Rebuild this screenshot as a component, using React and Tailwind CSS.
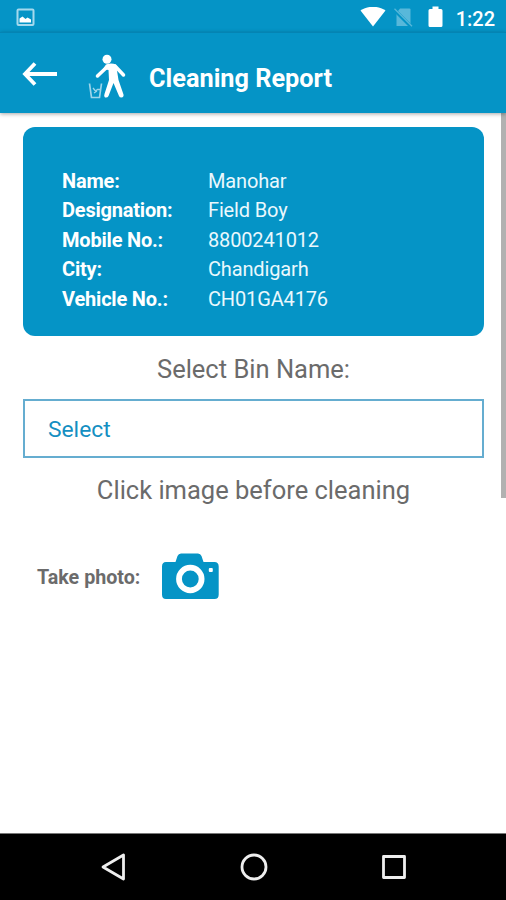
const DETAILS = [
    { label: 'Name:', value: 'Manohar' },
    { label: 'Designation:', value: 'Field Boy' },
    { label: 'Mobile No.:', value: '8800241012' },
    { label: 'City:', value: 'Chandigarh' },
    { label: 'Vehicle No.:', value: 'CH01GA4176' }
]

function StatusBar() {
    return (
        <div className="h-8 shrink-0 bg-[#0594c6] flex items-center pl-4 pr-[11px]">
            <svg className="w-[19px] h-[19px] mt-0.5" viewBox="0 0 19 19" fill="none">
                <rect x="1.5" y="1.5" width="16" height="15.5" rx="1" stroke="#a5d9ed" strokeWidth="2" />
                <path d="M3.500 14.500v-4l3-2 3 2.500 2-1.500 3.500 2v3z" fill="white" />
            </svg>
            <div className="ml-auto flex items-center">
                <svg className="w-[26px] h-5 mt-0.5" viewBox="0 0 26 20">
                    <path d="M0.5 3.5C8 -1.5 18 -1.5 25.5 3.5L13 19.5z" fill="white" />
                </svg>
                <svg className="w-[19px] h-5 ml-2 mt-1" viewBox="0 0 19 20">
                    <path d="M6 0.500h9.500q1 0 1 1v16.500h-14V5z" fill="#58b8da" />
                    <path d="M0 1.500L18 19.500" stroke="#0594c6" strokeWidth="3.500" />
                    <path d="M0.500 0.800L18 18.300" stroke="#58b8da" strokeWidth="1.300" />
                </svg>
                <svg className="w-[15px] h-[22px] ml-[15px] mt-0.5" viewBox="0 0 15 22">
                    <path d="M4.500 0.500h6v2.500H13q1.500 0 1.500 1.500v15q0 1.500-1.500 1.500H2q-1.500 0-1.500-1.500v-15Q0.500 3 2 3h2.500z" fill="white" />
                </svg>
                <span className="ml-[13px] mt-[5px] text-[20px] leading-6 font-medium text-white whitespace-nowrap">1:22</span>
            </div>
        </div>
    )
}

function AppBar() {
    return (
        <header className="relative z-10 h-[81px] shrink-0 bg-[#0594c6] border-t border-[#0484b3] flex items-center pl-[22px] shadow-[0_1px_4px_rgba(0,0,0,0.35)]">
            <svg className="w-9 h-6 mt-0.5" viewBox="0 0 36 24" fill="none" stroke="white" strokeWidth="3.8">
                <path d="M35 12H3M13 1.500L3 12L13 22.500" />
            </svg>
            <svg className="w-10 h-[46px] ml-[30px] mt-2" viewBox="88 54 40 46">
                <circle cx="107" cy="59.300" r="4.500" fill="white" />
                <path d="M107 67L97.500 76" stroke="white" strokeWidth="3.500" strokeLinecap="round" />
                <path d="M115 66L123.500 75" stroke="white" strokeWidth="3.500" strokeLinecap="round" />
                <path d="M106 64.500Q111 62.500 116 64.500L118.500 80L123.500 94.500Q124 97 121.500 97.500Q119.500 97.500 119 96L113.500 83L108.500 96Q107.500 98 105 97.500Q103.500 96.500 104.500 94L109 80L108.500 70L103 69z" fill="white" />
                <path d="M89.500 83.500L91.500 97.500H99.500L101.500 83.500" fill="none" stroke="#9ed5ea" strokeWidth="1.700" />
                <path d="M93 88L95.500 91L97.500 89.500H100M94 93L97 91" fill="none" stroke="#9ed5ea" strokeWidth="1.300" />
            </svg>
            <h1 className="ml-[21px] mt-[11px] text-[25.3px] leading-8 font-bold text-white whitespace-nowrap">Cleaning Report</h1>
        </header>
    )
}

function ProfileCard() {
    return (
        <div className="h-[209px] bg-[#0594c6] rounded-xl pt-[39px] pl-[39px]">
            {DETAILS.map((item) => (
                <div key={item.label} className="flex h-[29.5px] items-center text-[20px] text-white whitespace-nowrap">
                    <span className="w-[146px] font-bold tracking-[-0.2px]">{item.label}</span>
                    <span className="text-[#eaf8fd] tracking-[-0.15px]">{item.value}</span>
                </div>
            ))}
        </div>
    )
}

function NavBar() {
    return (
        <nav className="h-[67px] shrink-0 bg-black border-t border-[#777] flex items-center justify-between pl-[101px] pr-[99px]">
            <svg className="w-[25px] h-7" viewBox="0 0 25 28" fill="none" stroke="#eeeeee" strokeWidth="2.800" strokeLinejoin="round">
                <path d="M22.500 2V26L2 14z" />
            </svg>
            <svg className="w-7 h-7" viewBox="0 0 28 28" fill="none" stroke="#eeeeee" strokeWidth="2.800">
                <circle cx="14" cy="14" r="12" />
            </svg>
            <svg className="w-[26px] h-[26px]" viewBox="0 0 26 26" fill="none" stroke="#eeeeee" strokeWidth="2.800" strokeLinejoin="round">
                <rect x="2.500" y="2.500" width="21" height="21" />
            </svg>
        </nav>
    )
}

export default function App() {
    return (
        <div className="w-[506px] h-[900px] flex flex-col bg-white overflow-hidden font-['Roboto',sans-serif]">
            <StatusBar />
            <AppBar />

            <main className="flex-1 flex justify-between">
                <div className="w-[484px] pl-[23px] pt-3.5">
                    <ProfileCard />
                    <h2 className="mt-[17px] text-[25.5px] leading-8 text-center text-[#6b6b6b] whitespace-nowrap">Select Bin Name:</h2>
                    <button className="mt-3.5 w-full h-[59px] border-2 border-[#65add0] pl-[23px] pt-[3px] flex items-center text-[22.8px] text-[#148fc2]">
                        Select
                    </button>
                    <h2 className="mt-4 text-[25.5px] leading-8 text-center text-[#6b6b6b] whitespace-nowrap">Click image before cleaning</h2>
                    <div className="mt-[47px] pl-3.5 flex items-center">
                        <span className="w-[124px] pt-0.5 text-[19.7px] font-bold text-[#6b6b6b] whitespace-nowrap">Take photo:</span>
                        <svg className="w-[58px] h-[47px]" viewBox="161 553 58 47">
                            <path d="M181 553.500H198Q200.500 553.500 201.500 556L203.500 562H214.500Q218.700 562 218.700 566.500V594.500Q218.700 599 214.500 599H166Q162 599 162 594.500V566.500Q162 562 166 562H175.500L177.500 556Q178.500 553.500 181 553.500z" fill="#0594c6" />
                            <circle cx="190.300" cy="579" r="11.300" fill="none" stroke="white" strokeWidth="5.800" />
                            <rect x="208.800" y="568" width="4" height="4" rx="1" fill="white" />
                        </svg>
                    </div>
                </div>
                <div className="w-[5px] h-[385px] bg-[#b1b1b1]" />
            </main>

            <NavBar />
        </div>
    )
}
